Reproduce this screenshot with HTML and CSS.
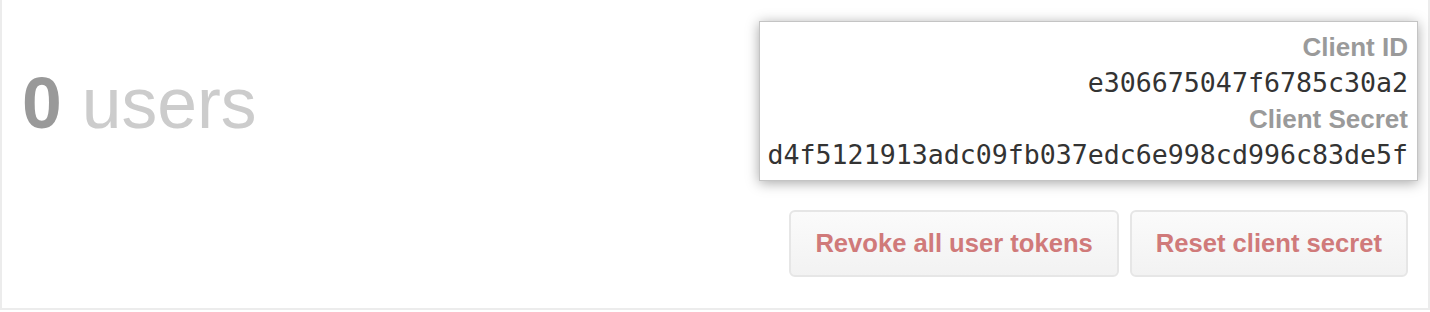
FILE: index.html
```html
<!DOCTYPE html>
<html>
<head>
<meta charset="utf-8">
<link rel="stylesheet" href="styles.css">
</head>
<body>
<div class="panel">
  <div class="count">
    <span class="num">0</span> <span class="label">users</span>
  </div>
  <div class="side">
    <div class="keys">
      <div class="key-label">Client ID</div>
      <div class="key-value">e306675047f6785c30a2</div>
      <div class="key-label">Client Secret</div>
      <div class="key-value">d4f5121913adc09fb037edc6e998cd996c83de5f</div>
    </div>
    <div class="actions">
      <button class="btn">Revoke all user tokens</button>
      <button class="btn">Reset client secret</button>
    </div>
  </div>
</div>
</body>
</html>
```
FILE: styles.css
```css
html, body {
  margin: 0;
  padding: 0;
  background: #fff;
}
body {
  font-family: "Liberation Sans", Arial, sans-serif;
  width: 1430px;
  height: 312px;
  overflow: hidden;
}
.panel {
  box-sizing: border-box;
  height: 310px;
  border: 2px solid #ececec;
  border-top: none;
  display: flex;
  justify-content: space-between;
  align-items: flex-start;
}
.count {
  padding-top: 63px;
  padding-left: 20px;
  font-size: 71.5px;
  line-height: 80px;
  white-space: nowrap;
}
.num {
  font-weight: bold;
  color: #999;
}
.label {
  color: #cccccc;
}
.side {
  display: flex;
  flex-direction: column;
  align-items: flex-end;
  padding-top: 21px;
  padding-right: 10px;
}
.keys {
  background: #fff;
  border: 1px solid #c4c4c4;
  box-shadow: 0 2px 12px rgba(0, 0, 0, 0.35);
  padding: 7px 9px 7px 8px;
  text-align: right;
}
.key-label {
  font-weight: bold;
  font-size: 26px;
  line-height: 36px;
  color: #9a9a9a;
}
.key-value {
  font-family: "DejaVu Sans Mono", "Liberation Mono", monospace;
  font-size: 26.6px;
  line-height: 36px;
  color: #333;
}
.actions {
  display: flex;
  gap: 11px;
  margin-top: 29px;
  margin-right: 10px;
}
.btn {
  box-sizing: border-box;
  height: 67px;
  padding: 0 24px;
  border: 2px solid #e6e6e6;
  border-radius: 6px;
  background: linear-gradient(#fbfbfb, #f2f2f2);
  font-family: "Liberation Sans", Arial, sans-serif;
  font-weight: bold;
  font-size: 25.6px;
  color: #d07a7a;
  cursor: pointer;
}
```
